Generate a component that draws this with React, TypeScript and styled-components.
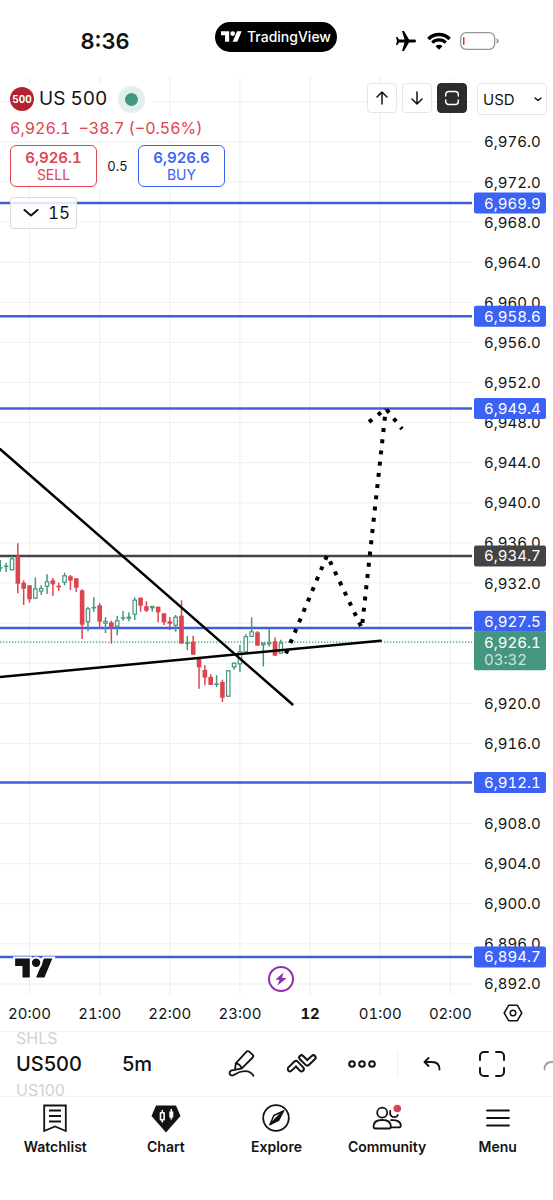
import React, { useLayoutEffect, useRef, useState } from 'react';
import styled, { createGlobalStyle, css } from 'styled-components';
import { MdAirplanemodeActive } from 'react-icons/md';

const color = {
  ink: '#131313',
  red: '#dc444f',
  green: '#44967f',
  blue: '#3b62f3',
  blueLine: '#3f60da',
  dark: '#444444',
  grid: '#efefef',
  purple: '#8e2fb0',
};

const GlobalStyle = createGlobalStyle`
  *, *::before, *::after { box-sizing: border-box; }
  body {
    margin: 0;
    background: #fff;
    color: ${color.ink};
    font-family: Inter, "Liberation Sans", sans-serif;
  }
  button, select { font: inherit; color: inherit; }
`;

/* ---------- Market data ---------- */

type Candle = [kind: 'up' | 'down', high: number, top: number, bottom: number, low: number];

const BASE = 6900;
const FIRST_BAR = -5;

// Offsets above BASE for every five minute bar; bar 0 opens at 20:00.
const candles: Candle[] = [
  ['up', 34.3, 33.57, 33.57, 33.13],
  ['up', 34.03, 33.73, 33.6, 33.1],
  ['up', 34.7, 34.47, 33.27, 33.27],
  ['down', 35.96, 34.7, 31.93, 30.98],
  ['down', 32.27, 32.03, 31.43, 29.81],
  ['down', 31.77, 31.77, 30.38, 30.04],
  ['up', 32.57, 31.47, 30.44, 30.44],
  ['up', 31.77, 31.5, 31.14, 30.81],
  ['up', 32.87, 32.17, 31.63, 30.91],
  ['down', 32.5, 32.27, 31.87, 30.74],
  ['down', 32.03, 31.73, 31.57, 31.2],
  ['up', 33.03, 32.77, 32.03, 31.77],
  ['down', 32.8, 32.67, 32.23, 31.3],
  ['down', 32.47, 32.47, 31.53, 31.11],
  ['down', 31.37, 31.27, 27.84, 26.42],
  ['up', 29.64, 29.48, 28.08, 27.18],
  ['up', 30.58, 29.61, 29.61, 29.14],
  ['down', 29.98, 29.78, 28.14, 27.41],
  ['up', 28.58, 28.21, 27.94, 27.01],
  ['down', 28.24, 28.08, 27.51, 25.95],
  ['up', 28.74, 28.28, 27.64, 26.79],
  ['up', 29.21, 28.58, 28.58, 28.24],
  ['up', 29.08, 28.64, 28.44, 28.18],
  ['up', 30.58, 30.34, 28.84, 28.31],
  ['down', 30.54, 30.54, 29.74, 29.14],
  ['down', 30.18, 29.68, 29.24, 29.11],
  ['up', 29.71, 29.71, 29.48, 29.14],
  ['down', 29.64, 29.64, 29.08, 28.08],
  ['down', 28.98, 28.98, 28.08, 27.81],
  ['down', 28.61, 28.18, 27.94, 27.31],
  ['up', 28.81, 28.64, 27.74, 27.14],
  ['down', 30.28, 28.74, 25.95, 25.95],
  ['up', 26.72, 26.05, 26.05, 25.29],
  ['down', 26.75, 26.15, 24.85, 24.85],
  ['down', 24.55, 24.55, 23.59, 21.46],
  ['down', 23.79, 23.32, 22.56, 21.8],
  ['down', 22.89, 22.63, 21.83, 21.83],
  ['up', 22.8, 21.96, 21.96, 21.63],
  ['down', 22.36, 22.13, 20.56, 20.13],
  ['up', 23.29, 23.29, 20.66, 20.66],
  ['up', 24.05, 24.05, 23.59, 23.35],
  ['up', 25.82, 25.19, 23.89, 23.12],
  ['up', 26.89, 26.69, 25.09, 25.09],
  ['up', 28.58, 27.18, 26.62, 26.62],
  ['down', 27.21, 27.08, 25.75, 25.75],
  ['up', 26.05, 26.05, 25.79, 23.69],
  ['up', 27.44, 26.02, 25.92, 25.65],
  ['down', 26.6, 26.19, 24.75, 24.75],
  ['up', 26.35, 26.05, 24.95, 24.95],
];

const levels = [
  { price: 6969.9, tone: 'blue' },
  { price: 6958.6, tone: 'blue' },
  { price: 6949.4, tone: 'blue' },
  { price: 6934.7, tone: 'dark' },
  { price: 6927.5, tone: 'blue' },
  { price: 6912.1, tone: 'blue' },
  { price: 6894.7, tone: 'blue' },
] as const;

const LAST_PRICE = 6926.1;

const hours = [
  { bar: 0, label: '20:00' },
  { bar: 12, label: '21:00' },
  { bar: 24, label: '22:00' },
  { bar: 36, label: '23:00' },
  { bar: 48, label: '12', day: true },
  { bar: 60, label: '01:00' },
  { bar: 72, label: '02:00' },
];

type Point = [bar: number, offset: number];
const trendLines: Point[][] = [
  [[-5.05, 45.37], [44.96, 19.9]],
  [[-5.05, 22.62], [60.08, 26.25]],
];
const forecast: Point[] = [[43.88, 24.97], [50.91, 34.76], [56.85, 27.51], [60.96, 49.39]];
const forecastHead: Point[] = [[58.08, 48.07], [60.96, 49.39], [63.73, 47.37]];

/* ---------- Scales ---------- */

const TOP_PRICE = 6982.48;
const PRICE_SPAN = 91.58;
const LEFT_BAR = -5.05;
const BAR_SPAN = 80.75;

const gridPrices = Array.from({ length: 23 }, (_, i) => 6980 - i * 4);
const axisPrices = gridPrices.filter((p) => p < 6980 && p !== 6928 && p !== 6924);

const format = (p: number) =>
  p.toLocaleString('en-US', { minimumFractionDigits: 1, maximumFractionDigits: 1 });

function useSize() {
  const ref = useRef<HTMLDivElement>(null);
  const [size, setSize] = useState({ width: 472, height: 918 });
  useLayoutEffect(() => {
    const el = ref.current;
    if (!el) return;
    const read = () => setSize({ width: el.clientWidth, height: el.clientHeight });
    read();
    const observer = new ResizeObserver(read);
    observer.observe(el);
    return () => observer.disconnect();
  }, []);
  return { ref, size };
}

/* ---------- Layout ---------- */

const Screen = styled.div`
  display: flex;
  flex-direction: column;
  min-height: 100vh;
  background: #fff;
`;

const StatusBar = styled.header`
  display: grid;
  grid-template-columns: 1fr auto 1fr;
  align-items: center;
  height: 77px;
  padding: 0 1px 4px 0;
`;

const Clock = styled.time`
  padding: 8px 5px 0 0;
  text-align: center;
  font-size: 22px;
  line-height: 28px;
  font-weight: 600;
`;

const BrandPill = styled.div`
  display: flex;
  align-items: center;
  justify-content: center;
  gap: 5px;
  width: 122px;
  height: 30px;
  border-radius: 15px;
  background: #000;
  color: #fff;
  font-size: 14px;
  line-height: 20px;
  font-weight: 500;
`;

const StatusIcons = styled.div`
  display: flex;
  align-items: center;
  justify-content: center;
  gap: 9px;
  padding: 8px 0 0 4px;
  color: #000;
`;

const ChartArea = styled.main`
  position: relative;
  flex: 1;
  display: grid;
  grid-template-columns: minmax(0, 1fr) 81px;
  grid-template-rows: minmax(480px, 1fr) 36px;
  font-variant-numeric: tabular-nums;
`;

const Plot = styled.div`
  position: relative;
  overflow: hidden;
`;

const Canvas = styled.svg`
  display: block;
  width: 100%;
  height: 100%;
  font-size: 15px;
`;

const Legend = styled.section`
  position: absolute;
  top: 8px;
  left: 10px;
  display: flex;
  flex-direction: column;
  align-items: flex-start;
`;

const TitleRow = styled.div`
  display: flex;
  align-items: center;
  height: 28px;
  padding-right: 6px;
  background: #fff;
`;

const SymbolBadge = styled.span`
  display: grid;
  place-items: center;
  width: 24px;
  height: 24px;
  margin-right: 5px;
  border-radius: 50%;
  background: #b3222e;
  color: #fff;
  font-size: 10px;
  font-weight: 700;
`;

const SymbolName = styled.h1`
  margin: 0 11px 0 0;
  font-size: 19px;
  line-height: 28px;
  font-weight: 400;
`;

const MarketOpen = styled.span`
  width: 27px;
  height: 27px;
  border: 7px solid #e0f0ec;
  border-radius: 50%;
  background: ${color.green};
`;

const ChangeRow = styled.div`
  display: flex;
  gap: 8px;
  margin: 3px 0 5px;
  background: #fff;
  color: ${color.red};
  font-size: 16px;
  line-height: 24px;
`;

const TradeRow = styled.div`
  display: flex;
  align-items: center;
  background: #fff;
`;

const Spread = styled.span`
  width: 41px;
  text-align: center;
  font-size: 13px;
`;

const TradeButton = styled.button<{ $tone: string }>`
  display: flex;
  flex-direction: column;
  align-items: center;
  width: 87px;
  height: 42px;
  padding: 3px 0;
  border: 1px solid ${(p) => p.$tone};
  border-radius: 6px;
  background: #fff;
  color: ${(p) => p.$tone};
  font-size: 14px;
  line-height: 17px;

  strong {
    font-size: 15px;
    font-weight: 600;
  }
`;

const CollapseButton = styled.button`
  display: flex;
  align-items: center;
  justify-content: space-between;
  width: 67px;
  height: 32px;
  margin-top: 10px;
  padding: 0 6px 0 12px;
  border: 1px solid #dcdcdc;
  border-radius: 3px;
  background: rgba(255, 255, 255, 0.85);
  font-size: 17px;
`;

const Controls = styled.div`
  position: absolute;
  top: 6px;
  right: 6px;
  display: flex;
  align-items: flex-start;
  gap: 5px;
`;

const ControlButton = styled.button<{ $active?: boolean }>`
  display: grid;
  place-items: center;
  width: 30px;
  height: 30px;
  padding: 0;
  border: 1px solid #e6e6e6;
  border-radius: 4px;
  background: #fff;
  ${(p) =>
    p.$active &&
    css`
      border-color: #2c2c2c;
      background: #2c2c2c;
      color: #fff;
    `}
`;

const CurrencyField = styled.label`
  position: relative;
  margin-left: 5px;

  svg {
    position: absolute;
    top: 12px;
    right: 5px;
    pointer-events: none;
  }
`;

const CurrencySelect = styled.select`
  appearance: none;
  width: 70px;
  height: 32px;
  padding: 0 5px;
  border: 1px solid #e6e6e6;
  border-radius: 4px;
  background: #fff;
  font-size: 15px;
`;

const Watermark = styled.a`
  position: absolute;
  bottom: 10px;
  left: 12px;
  display: block;
  color: ${color.ink};
`;

const EventButton = styled.button`
  position: absolute;
  bottom: 3px;
  display: grid;
  place-items: center;
  width: 26px;
  height: 26px;
  margin-left: -13px;
  padding: 0;
  border: 2px solid ${color.purple};
  border-radius: 50%;
  background: #fff;
  color: ${color.purple};
`;

const AxisSettings = styled.button`
  display: grid;
  place-items: center;
  padding: 0;
  border: 0;
  background: none;
`;

const Toolbar = styled.div`
  display: flex;
  align-items: center;
  height: 65px;
  overflow: hidden;
  border-top: 1px solid #f2f2f2;
`;

const SymbolWheel = styled.div`
  display: flex;
  flex-direction: column;
  justify-content: center;
  align-items: flex-start;
  flex: 0 0 122px;
  padding-left: 16px;
`;

const WheelItem = styled.button<{ $current?: boolean }>`
  padding: 0;
  border: 0;
  background: none;
  color: ${(p) => (p.$current ? color.ink : '#d2d2d2')};
  font-size: ${(p) => (p.$current ? 20 : 16)}px;
  line-height: ${(p) => (p.$current ? 40 : 12)}px;
  font-weight: ${(p) => (p.$current ? 500 : 400)};
`;

const IntervalButton = styled.button`
  flex: 0 0 90px;
  padding: 0;
  border: 0;
  background: none;
  text-align: left;
  font-size: 20px;
  line-height: 32px;
  font-weight: 500;
`;

const ToolButton = styled.button<{ $faded?: boolean }>`
  display: grid;
  place-items: center;
  flex: 0 0 60px;
  height: 48px;
  padding: 0;
  border: 0;
  background: none;
  opacity: ${(p) => (p.$faded ? 0.4 : 1)};
`;

const ToolDivider = styled.span`
  flex: 0 0 1px;
  height: 24px;
  margin: 0 4px 0 5px;
  background: #efefef;
`;

const TabBar = styled.nav`
  display: grid;
  grid-template-columns: repeat(5, 1fr);
  height: 104px;
  padding-top: 6px;
  border-top: 1px solid #f2f2f2;
`;

const Tab = styled.a`
  display: flex;
  flex-direction: column;
  align-items: center;
  gap: 4px;
  color: ${color.ink};
  text-decoration: none;
  font-size: 14px;
  line-height: 20px;
  font-weight: 600;
`;

/* ---------- Icons ---------- */

const Stroke = styled.svg.attrs({ fill: 'none', stroke: 'currentColor', 'aria-hidden': true })`
  display: block;
  stroke-linecap: round;
  stroke-linejoin: round;
`;

const BrandShape = () => (
  <>
    <path d="M14 22H7V11H0V4h14v18zM28 22h-8l7.5-18h8L28 22z" />
    <circle cx="20" cy="8" r="4" />
  </>
);

const WifiIcon = () => (
  <svg width="24" height="18" viewBox="0 0 24 18" fill="none" stroke="#000" aria-hidden>
    <path d="M1.4 6.9A15 15 0 0 1 22.6 6.9" strokeWidth="3.5" />
    <path d="M5.2 10.7A9.6 9.6 0 0 1 18.8 10.7" strokeWidth="3.1" />
    <path d="M12 17.7 8.5 14.2A5 5 0 0 1 15.5 14.2Z" fill="#000" stroke="none" />
  </svg>
);

const BatteryIcon = () => (
  <svg width="39" height="18" viewBox="0 0 39 18" fill="none" aria-hidden>
    <rect x="0.7" y="0.7" width="34" height="16.6" rx="5.5" stroke="#969696" strokeWidth="1.3" />
    <rect x="3" y="5" width="1.5" height="8" rx="0.7" fill="#e5322d" />
    <path d="M36.6 6.2c1.6.6 2 1.6 2 2.8s-.4 2.2-2 2.8z" fill="#969696" />
  </svg>
);

const ArrowUpIcon = () => (
  <Stroke width="14" height="14" viewBox="0 0 14 14" strokeWidth="1.5">
    <path d="M7 13V1.5M2 6l5-5 5 5" />
  </Stroke>
);

const ArrowDownIcon = () => (
  <Stroke width="14" height="14" viewBox="0 0 14 14" strokeWidth="1.5">
    <path d="M7 1v11.5M2 8l5 5 5-5" />
  </Stroke>
);

const FitIcon = () => (
  <Stroke width="16" height="16" viewBox="0 0 16 16" strokeWidth="1.5">
    <path d="M1.7 6V4.5a3 3 0 0 1 3-3h6.6a3 3 0 0 1 3 3V6M1.7 10v1.5a3 3 0 0 0 3 3h6.6a3 3 0 0 0 3-3V10" />
  </Stroke>
);

const PencilIcon = () => (
  <Stroke width="28" height="28" viewBox="0 0 28 28" strokeWidth="1.8">
    <path d="M7 19.8 7.8 13.4 18.3 1.9c.8-.9 2-1 2.9-.2l3.3 2.9c.9.8 1 2 .2 2.9L13.8 18.4z" />
    <path d="M7.8 13.4c2.8.4 5 2.3 6 5" />
    <path d="M6 20.2c-3-.3-4.8 1.400-4.400 3.300.4 2 2.800 2.400 4.600 1.200C9.600 22.500 13 21.200 17 21.200c3.500 0 6.500 1.500 8.500 4.500" />
  </Stroke>
);

const LOWER_CHEVRON = 'M3 17 9 11.200 14.500 17';
const UPPER_CHEVRON = 'M14.500 5.600 20.200 11.200 26.300 5.600';

const ZigzagIcon = () => (
  <Stroke width="30" height="24" viewBox="0 0 30 24">
    <path d={LOWER_CHEVRON} strokeWidth="6.600" />
    <path d={UPPER_CHEVRON} strokeWidth="6.600" />
    <path d={LOWER_CHEVRON} stroke="#fff" strokeWidth="2.600" />
    <path d={UPPER_CHEVRON} stroke="#fff" strokeWidth="2.600" />
  </Stroke>
);

const MoreIcon = () => (
  <Stroke width="28" height="8" viewBox="0 0 28 8" strokeWidth="2">
    <circle cx="4" cy="4" r="2.800" />
    <circle cx="14" cy="4" r="2.800" />
    <circle cx="24" cy="4" r="2.800" />
  </Stroke>
);

const UndoIcon = ({ flipped = false }: { flipped?: boolean }) => (
  <Stroke width="18" height="14" viewBox="0 0 18 14" strokeWidth="1.800">
    <g transform={flipped ? 'matrix(-1 0 0 1 18 0)' : undefined}>
      <path d="M5.500 1 1.500 5 5.500 9M1.500 5H9c5 0 7.500 3 7.500 7.500" />
    </g>
  </Stroke>
);

const FullscreenIcon = () => (
  <Stroke width="26" height="26" viewBox="0 0 26 26" strokeWidth="2">
    <path d="M1 9V5a4 4 0 0 1 4-4h4M17 1h4a4 4 0 0 1 4 4v4M25 17v4a4 4 0 0 1-4 4h-4M9 25H5a4 4 0 0 1-4-4v-4" />
  </Stroke>
);

const HexIcon = () => (
  <Stroke width="20" height="18" viewBox="0 0 20 18" strokeWidth="1.500">
    <path d="M5.800 1.200h8.400L18.800 9l-4.600 7.800H5.800L1.200 9z" />
    <circle cx="10" cy="9" r="2.800" />
  </Stroke>
);

const WatchlistIcon = () => (
  <Stroke width="30" height="30" viewBox="0 0 30 30" strokeWidth="1.800">
    <path d="M4.200 2.500h21.600v25.500l-10.800-4.500L4.200 28zM9 7.500h12M9 13h12M9 18.500h12" strokeLinejoin="miter" strokeLinecap="butt" />
  </Stroke>
);

const ChartIcon = () => (
  <Stroke width="30" height="30" viewBox="0 0 30 30">
    <path d="M5 2.500h20l4.500 10.500L15 29.500.500 13z" fill="currentColor" stroke="none" />
    <path d="M9.500 9.700h3.600v7H9.500zM11.300 7v2.500M11.300 17v2.500" stroke="#fff" strokeWidth="1.600" strokeLinecap="butt" />
    <path d="M18.300 8.500h4v6h-4zM19.500 6h1.600v10.500h-1.600z" fill="#fff" stroke="none" />
  </Stroke>
);

const ExploreIcon = () => (
  <Stroke width="30" height="30" viewBox="0 0 30 30" strokeWidth="1.800">
    <circle cx="15" cy="15" r="12.800" />
    <path d="M22.500 8 12.800 12.500 9 21.500z" strokeWidth="1.500" />
    <path d="M22.500 8 9 21.500 17.600 17.400z" fill="currentColor" strokeWidth="1.500" />
  </Stroke>
);

const CommunityIcon = () => (
  <Stroke width="30" height="30" viewBox="0 0 30 30" strokeWidth="1.800">
    <circle cx="10.200" cy="9.700" r="5" />
    <path d="M1.500 23.500c0-4.500 3.500-6.500 8.700-6.500s8.700 2 8.700 6.500c0 1.400-.7 2-2 2H3.500c-1.300 0-2-.6-2-2z" />
    <path d="M18.200 8c-.8 3.600 1.200 6.200 4 6.200 1.800 0 3-.8 3.600-2.200M19 17.200c5.500-.8 9.800 1.600 9.800 5.300 0 1.300-.6 1.900-1.800 1.900h-8" />
    <circle cx="25.300" cy="5.500" r="3.800" fill={color.red} stroke="none" />
  </Stroke>
);

const MenuIcon = () => (
  <Stroke width="30" height="30" viewBox="0 0 30 30" strokeWidth="1.800">
    <path d="M4 7.500h22M4 15h22M4 22.500h22" />
  </Stroke>
);

/* ---------- Chart ---------- */

const toneFill = { blue: color.blue, dark: color.dark };
const toneLine = { blue: color.blueLine, dark: color.dark };

function PriceTag({ y, price, fill }: { y: number; price: number; fill: string }) {
  return (
    <g>
      <rect x="2" y={y - 10.5} width="72" height="21" rx="2" fill={fill} />
      <text x="12" y={y} dominantBaseline="central" fill="#fff">
        {format(price)}
      </text>
    </g>
  );
}

function Chart() {
  const { ref, size } = useSize();
  const toX = (bar: number) => ((bar - LEFT_BAR) * size.width) / BAR_SPAN;
  const toY = (price: number) => ((TOP_PRICE - price) * size.height) / PRICE_SPAN;
  const points = (line: Point[]) => line.map(([b, o]) => `${toX(b)},${toY(BASE + o)}`).join(' ');
  const lastY = toY(LAST_PRICE);

  return (
    <ChartArea>
      <Plot ref={ref}>
        <Canvas role="img" aria-label="US 500 five minute candles">
          <g stroke={color.grid} strokeWidth="1">
            {gridPrices.map((p) => (
              <line key={p} x1="0" x2="100%" y1={toY(p)} y2={toY(p)} />
            ))}
            {hours.map((h) => (
              <line key={h.bar} x1={toX(h.bar)} x2={toX(h.bar)} y1="0" y2="100%" />
            ))}
          </g>
          <g strokeWidth="2.500">
            {levels.map((l) => (
              <line key={l.price} x1="0" x2="100%" y1={toY(l.price)} y2={toY(l.price)} stroke={toneLine[l.tone]} />
            ))}
          </g>
          <line x1="0" x2="100%" y1={lastY} y2={lastY} stroke={color.green} strokeWidth="1.200" strokeDasharray="1.300 1.700" />
          {candles.map(([kind, high, top, bottom, low], i) => {
            const x = toX(i + FIRST_BAR);
            const y1 = toY(BASE + top);
            const y2 = toY(BASE + bottom);
            const tone = kind === 'up' ? color.green : color.red;
            return (
              <g key={i} stroke={tone}>
                <line x1={x} x2={x} y1={toY(BASE + high)} y2={toY(BASE + low)} strokeWidth="1.500" />
                {kind === 'down' ? (
                  <rect x={x - 2.3} y={y1} width="4.600" height={y2 - y1} fill={tone} stroke="none" />
                ) : (
                  <rect
                    x={x - 1.7}
                    y={y1 + 0.5}
                    width="3.400"
                    height={Math.max(y2 - y1 - 1, 0.3)}
                    fill="#fff"
                    strokeWidth="1.200"
                  />
                )}
              </g>
            );
          })}
          <g fill="none" stroke="#000" strokeWidth="2.500" strokeLinecap="round">
            {trendLines.map((line, i) => (
              <polyline key={i} points={points(line)} />
            ))}
          </g>
          <g fill="none" stroke="#000" strokeWidth="4" strokeDasharray="4 7.300">
            <polyline points={points(forecast)} />
            <polyline points={points(forecastHead)} />
          </g>
        </Canvas>
        <Watermark href="#tradingview" aria-label="TradingView">
          <svg width="44" height="26" viewBox="-3 1 42 24" fill="currentColor" stroke="#fff" strokeWidth="4" paintOrder="stroke">
            <BrandShape />
          </svg>
        </Watermark>
        <EventButton aria-label="Events" style={{ left: toX(43) }}>
          <svg width="14" height="14" viewBox="0 0 14 14" fill="currentColor" aria-hidden>
            <path d="M9.500.500 1.500 7.600l4 .3L3.500 13.500l9-7.300-4.500-.4z" />
          </svg>
        </EventButton>
      </Plot>

      <Canvas aria-label="Price scale">
        <g fill={color.ink}>
          {axisPrices.map((p) => (
            <text key={p} x="12" y={toY(p)} dominantBaseline="central">
              {format(p)}
            </text>
          ))}
        </g>
        {levels.map((l) => (
          <PriceTag
            key={l.price}
            y={l.price === 6927.5 ? lastY - 21 : toY(l.price)}
            price={l.price}
            fill={toneFill[l.tone]}
          />
        ))}
        <rect x="2" y={lastY - 11} width="72" height="39" rx="2" fill={color.green} />
        <g fill="#fff">
          <text x="12" y={lastY} dominantBaseline="central">
            {format(LAST_PRICE)}
          </text>
          <text x="12" y={lastY + 17} dominantBaseline="central" fillOpacity="0.75">
            03:32
          </text>
        </g>
      </Canvas>

      <Canvas aria-label="Time scale">
        <g fill={color.ink} textAnchor="middle">
          {hours.map((h) => (
            <text key={h.bar} x={toX(h.bar)} y="18" dominantBaseline="central" fontWeight={h.day ? 700 : 400}>
              {h.label}
            </text>
          ))}
        </g>
      </Canvas>
      <AxisSettings aria-label="Scale settings">
        <HexIcon />
      </AxisSettings>

      <Legend>
        <TitleRow>
          <SymbolBadge>500</SymbolBadge>
          <SymbolName>US 500</SymbolName>
          <MarketOpen aria-label="Market open" />
        </TitleRow>
        <ChangeRow>
          <span>6,926.1</span>
          <span>−38.7 (−0.56%)</span>
        </ChangeRow>
        <TradeRow>
          <TradeButton $tone={color.red}>
            <strong>6,926.1</strong>
            SELL
          </TradeButton>
          <Spread>0.5</Spread>
          <TradeButton $tone={color.blue}>
            <strong>6,926.6</strong>
            BUY
          </TradeButton>
        </TradeRow>
        <CollapseButton aria-label="15 indicators">
          <Stroke width="16" height="8" viewBox="0 0 16 8" strokeWidth="2">
            <path d="M1.500 1 8 6.500 14.500 1" />
          </Stroke>
          15
        </CollapseButton>
      </Legend>

      <Controls>
        <ControlButton aria-label="Move up">
          <ArrowUpIcon />
        </ControlButton>
        <ControlButton aria-label="Move down">
          <ArrowDownIcon />
        </ControlButton>
        <ControlButton $active aria-label="Fit chart">
          <FitIcon />
        </ControlButton>
        <CurrencyField>
          <CurrencySelect aria-label="Currency" defaultValue="USD">
            <option>USD</option>
            <option>EUR</option>
          </CurrencySelect>
          <Stroke width="8" height="8" viewBox="0 0 8 8" strokeWidth="1.500">
            <path d="M1 3 4 5.500 7 3" />
          </Stroke>
        </CurrencyField>
      </Controls>
    </ChartArea>
  );
}

const tabs = [
  { label: 'Watchlist', icon: <WatchlistIcon /> },
  { label: 'Chart', icon: <ChartIcon /> },
  { label: 'Explore', icon: <ExploreIcon /> },
  { label: 'Community', icon: <CommunityIcon /> },
  { label: 'Menu', icon: <MenuIcon /> },
];

export default function App() {
  return (
    <Screen>
      <GlobalStyle />
      <StatusBar>
        <Clock>8:36</Clock>
        <BrandPill>
          <svg width="21" height="11" viewBox="0 4 36 18" fill="currentColor" aria-hidden>
            <BrandShape />
          </svg>
          TradingView
        </BrandPill>
        <StatusIcons>
          <MdAirplanemodeActive size={24} style={{ transform: 'rotate(90deg)' }} />
          <WifiIcon />
          <BatteryIcon />
        </StatusIcons>
      </StatusBar>

      <Chart />

      <Toolbar>
        <SymbolWheel>
          <WheelItem>SHLS</WheelItem>
          <WheelItem $current>US500</WheelItem>
          <WheelItem>US100</WheelItem>
        </SymbolWheel>
        <IntervalButton>5m</IntervalButton>
        <ToolButton aria-label="Drawings">
          <PencilIcon />
        </ToolButton>
        <ToolButton aria-label="Indicators">
          <ZigzagIcon />
        </ToolButton>
        <ToolButton aria-label="More">
          <MoreIcon />
        </ToolButton>
        <ToolDivider />
        <ToolButton aria-label="Undo">
          <UndoIcon />
        </ToolButton>
        <ToolButton aria-label="Fullscreen">
          <FullscreenIcon />
        </ToolButton>
        <ToolButton aria-label="Redo" $faded>
          <UndoIcon flipped />
        </ToolButton>
      </Toolbar>

      <TabBar>
        {tabs.map((t) => (
          <Tab key={t.label} href={`#${t.label.toLowerCase()}`}>
            {t.icon}
            {t.label}
          </Tab>
        ))}
      </TabBar>
    </Screen>
  );
}
